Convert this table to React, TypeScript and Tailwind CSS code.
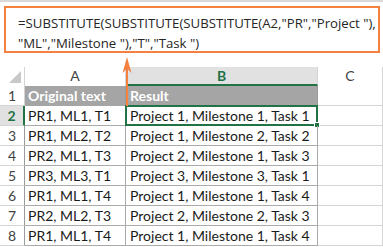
const rows: [string, string][] = [
  ["PR1, ML1, T1", "Project 1, Milestone 1, Task 1"],
  ["PR1, ML2, T2", "Project 1, Milestone 2, Task 2"],
  ["PR2, ML1, T3", "Project 2, Milestone 1, Task 3"],
  ["PR3, ML3, T1", "Project 3, Milestone 3, Task 1"],
  ["PR1, ML1, T4", "Project 1, Milestone 1, Task 4"],
  ["PR2, ML2, T3", "Project 2, Milestone 2, Task 3"],
  ["PR1, ML1, T4", "Project 1, Milestone 1, Task 4"],
];

const cellFont = { fontFamily: "Lato, 'Open Sans', sans-serif" };

export default function App() {
  return (
    <div
      className="relative h-[247px] w-[383px] overflow-hidden whitespace-nowrap bg-white"
      style={cellFont}
    >
      <div className="h-[2px] w-full bg-[#d9d9d9]" />

      {/* formula bar */}
      <div
        className="ml-[4px] mt-[4px] h-[47px] w-[376px] border-2 border-[#f4813f] pl-[12px] pt-[5px] text-[13.2px] leading-[20px] text-[#262626]"
        style={{ fontFamily: "'Open Sans', sans-serif" }}
      >
        <div>=SUBSTITUTE(SUBSTITUTE(SUBSTITUTE(A2,"PR","Project "),</div>
        <div>"ML","Milestone "),"T","Task ")</div>
      </div>

      <div className="h-[14px]" />

      {/* column headers */}
      <div className="grid h-[19px] grid-cols-[25px_101px_192px_65px] text-[14px] leading-[17px] text-[#444]">
        <div className="relative border-r border-[#d4d4d4]">
          <div className="absolute bottom-[3px] right-[3px] h-0 w-0 border-b-[12px] border-l-[12px] border-b-[#c8c8c8] border-l-transparent" />
        </div>
        <div className="border-r border-[#d4d4d4] text-center">A</div>
        <div className="border-b-2 border-r border-b-[#217346] border-r-[#d4d4d4] bg-[#e1e1e1] text-center font-bold text-[#217346]">B</div>
        <div className="border-r border-[#d4d4d4] text-center">C</div>
      </div>

      {/* row 1 */}
      <div className="grid h-[20px] grid-cols-[25px_101px_192px_65px] text-[14px] leading-[19px]">
        <div className="border-b border-r border-[#d4d4d4] text-center text-[#444]">1</div>
        <div className="border-r border-[#9b9b9b] bg-[#a5a5a5] pl-[3px] font-bold text-white">Original text</div>
        <div className="border-r border-[#9b9b9b] bg-[#a5a5a5] pl-[4px] font-bold text-white">Result</div>
        <div className="border-b border-r border-[#d4d4d4]" />
      </div>

      {rows.map(([a, b], i) => {
        const selected = i === 0;
        return (
          <div
            key={i}
            className="grid h-[20px] grid-cols-[25px_101px_192px_65px] text-[14px] leading-[19px] text-[#1a1a1a]"
          >
            <div
              className={
                selected
                  ? "border-b border-r-2 border-b-[#d4d4d4] border-r-[#217346] bg-[#e1e1e1] text-center font-bold text-[#217346]"
                  : "border-b border-r border-b-[#d4d4d4] border-r-[#9b9b9b] text-center text-[#444]"
              }
            >
              {i + 2}
            </div>
            <div className="border-b border-r border-[#ababab] pl-[3px]">{a}</div>
            <div className="relative border-b border-r border-[#ababab] pl-[4px]">
              {b}
              {selected && (
                <div className="absolute -left-px -top-px h-[21px] w-[193px] border-2 border-[#217346]">
                  <div className="absolute -bottom-[4px] -right-[4px] h-[6px] w-[6px] border border-white bg-[#217346]" />
                </div>
              )}
            </div>
            <div className="border-b border-r border-[#d4d4d4]" />
          </div>
        );
      })}

      {/* arrow */}
      <svg
        className="absolute left-[119px] top-[55px]"
        width="16"
        height="52"
        viewBox="0 0 16 52"
      >
        <line x1="8" y1="10" x2="8" y2="51" stroke="#f4813f" strokeWidth="2" />
        <path d="M8 2 L3.5 18 L8 13.5 L12.5 18 Z" fill="#f4813f" />
      </svg>
    </div>
  );
}
